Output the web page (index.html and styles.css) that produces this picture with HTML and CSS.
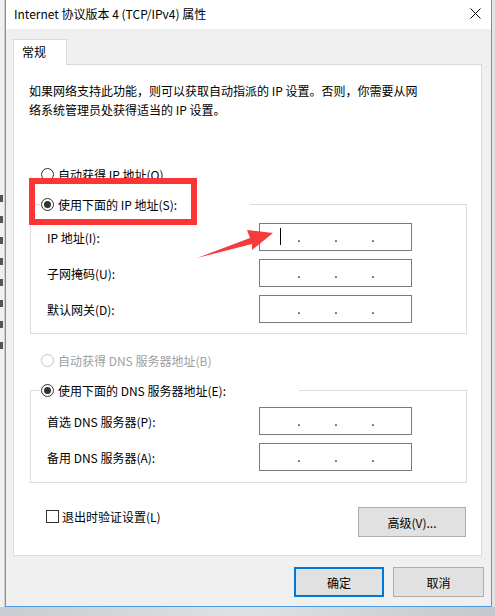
FILE: index.html
```html
<!DOCTYPE html>
<html lang="zh-CN">
<head>
    <meta charset="UTF-8">
    <meta name="viewport" content="width=device-width, initial-scale=1.0">
    <title>Internet 协议版本 4 (TCP/IPv4) 属性</title>
    <link rel="stylesheet" href="styles.css">
</head>
<body>
    <div class="desk">
        <div class="side side-left">
            <span class="mark"></span><span class="mark"></span><span class="mark"></span><span class="mark"></span>
            <span class="mark"></span><span class="mark"></span><span class="mark"></span><span class="mark"></span>
        </div>

        <div class="window">
            <div class="titlebar">
                <span class="title">Internet 协议版本 4 (TCP/IPv4) 属性</span>
                <svg class="close" width="11" height="11" viewBox="0 0 11 11">
                    <path d="M0.5 0.5 L10.5 10.5 M10.5 0.5 L0.5 10.5" stroke="#000" stroke-width="1" fill="none"/>
                </svg>
            </div>

            <div class="client">
                <div class="tabs">
                    <div class="tab">常规</div>
                </div>

                <div class="panel">
                    <p class="intro">如果网络支持此功能，则可以获取自动指派的 IP 设置。否则，你需要从网<br>络系统管理员处获得适当的 IP 设置。</p>

                    <div class="radio radio-top"><span class="dot"></span>自动获得 IP 地址(O)</div>

                    <div class="group group-ip">
                        <div class="group-head"><span class="dot checked"></span>使用下面的 IP 地址(S):</div>
                        <div class="rows">
                            <div class="row">
                                <span>IP 地址(I):</span>
                                <div class="ip"><span class="seg"><span class="caret"></span></span><span class="sep">.</span><span class="seg"></span><span class="sep">.</span><span class="seg"></span><span class="sep">.</span></div>
                            </div>
                            <div class="row">
                                <span>子网掩码(U):</span>
                                <div class="ip"><span class="seg"></span><span class="sep">.</span><span class="seg"></span><span class="sep">.</span><span class="seg"></span><span class="sep">.</span></div>
                            </div>
                            <div class="row">
                                <span>默认网关(D):</span>
                                <div class="ip"><span class="seg"></span><span class="sep">.</span><span class="seg"></span><span class="sep">.</span><span class="seg"></span><span class="sep">.</span></div>
                            </div>
                        </div>
                    </div>

                    <div class="radio radio-dns disabled"><span class="dot"></span>自动获得 DNS 服务器地址(B)</div>

                    <div class="group group-dns">
                        <div class="group-head"><span class="dot checked"></span>使用下面的 DNS 服务器地址(E):</div>
                        <div class="rows">
                            <div class="row">
                                <span>首选 DNS 服务器(P):</span>
                                <div class="ip"><span class="seg"></span><span class="sep">.</span><span class="seg"></span><span class="sep">.</span><span class="seg"></span><span class="sep">.</span></div>
                            </div>
                            <div class="row">
                                <span>备用 DNS 服务器(A):</span>
                                <div class="ip"><span class="seg"></span><span class="sep">.</span><span class="seg"></span><span class="sep">.</span><span class="seg"></span><span class="sep">.</span></div>
                            </div>
                        </div>
                    </div>

                    <div class="options">
                        <div class="check"><span class="box"></span>退出时验证设置(L)</div>
                        <button class="btn btn-adv">高级(V)...</button>
                    </div>

                    <!-- 标注 -->
                    <div class="callout"></div>
                    <svg class="arrow" width="90" height="40" viewBox="0 0 90 40">
                        <polygon points="7,33 60,13 57,5 83,8 62,25 62,19" fill="#f53b3b"/>
                    </svg>
                </div>

                <div class="actions">
                    <button class="btn btn-ok">确定</button>
                    <button class="btn btn-cancel">取消</button>
                </div>
            </div>
        </div>

        <div class="side side-right"></div>
    </div>
</body>
</html>
```

FILE: styles.css
```css
* {
    box-sizing: border-box;
}

body {
    margin: 0;
    background: linear-gradient(to right, #c9ccd0, #dfe1e3, #c4c7cb);
    font-family: "Noto Sans CJK SC", "Noto Sans", sans-serif;
    font-size: 12px;
    color: #000;
}

.desk {
    display: flex;
    height: 607px;
}

.side {
    background: #f0f0f0;
}

.side-left {
    width: 5px;
    display: flex;
    flex-direction: column;
    gap: 14px;
    padding-top: 195px;
    border-right: 1px solid #d0d0d0;
}

.mark {
    width: 3px;
    height: 7px;
    background: #555;
}

.side-right {
    width: 3px;
    background: #e4e4e4;
}

.window {
    width: 487px;
    height: 607px;
    border: 1px solid #4d9be6;
    border-top: none;
    background: #f0f0f0;
    display: flex;
    flex-direction: column;
}

.titlebar {
    height: 29px;
    background: #fff;
    display: flex;
    align-items: center;
    justify-content: space-between;
    padding: 0 10px 2px 8px;
}

.client {
    padding: 10px 9px 0 7px;
}

.tabs {
    display: flex;
}

.tab {
    width: 54px;
    height: 26px;
    border: 1px solid #d9d9d9;
    border-bottom: none;
    background: #fff;
    padding-left: 8px;
    line-height: 24px;
    margin-bottom: -1px;
    position: relative;
    z-index: 1;
}

.panel {
    position: relative;
    height: 492px;
    border: 1px solid #d9d9d9;
    background: #fff;
}

.intro {
    margin: 0;
    padding: 16px 0 0 15px;
    line-height: 19px;
}

.radio,
.group-head,
.check {
    display: flex;
    align-items: center;
    gap: 4px;
    height: 18px;
}

.radio-top {
    margin: 46px 0 0 27px;
}

.radio-dns {
    margin: 17px 0 0 27px;
}

.disabled {
    color: #a0a0a0;
}

.dot {
    width: 13px;
    height: 13px;
    border: 1px solid #333;
    border-radius: 50%;
    background: #fff;
    display: flex;
    align-items: center;
    justify-content: center;
}

.disabled .dot {
    border-color: #c4c4c4;
}

.dot.checked::after {
    content: "";
    width: 7px;
    height: 7px;
    border-radius: 50%;
    background: #333;
}

.group {
    margin: 21px 14px 0 16px;
    border: 1px solid #dcdcdc;
}

.group-head {
    margin: -10px 0 0 9px;
    padding-left: 1px;
    background: #fff;
}

.group-ip .group-head {
    width: 210px;
}

.group-dns .group-head {
    width: 259px;
}

.rows {
    display: flex;
    flex-direction: column;
    gap: 8px;
    padding: 10px 0 10px 16px;
}

.group-dns .rows {
    padding-top: 8px;
    padding-bottom: 11px;
}

.row {
    display: grid;
    grid-template-columns: 212px 153px;
    align-items: center;
}

.ip {
    height: 28px;
    border: 1px solid #7a7a7a;
    display: flex;
    align-items: center;
    padding-left: 4px;
}

.seg {
    width: 33px;
    height: 100%;
    display: flex;
    align-items: center;
}

.sep {
    width: 4px;
    text-align: center;
    line-height: 14px;
    color: #222;
}

.caret {
    width: 1px;
    height: 17px;
    margin: 0 0 2px 16px;
    background: #000;
}

.options {
    display: flex;
    justify-content: space-between;
    align-items: flex-start;
    margin: 24px 15px 0 32px;
}

.check {
    gap: 3px;
    margin-top: 1px;
    height: 16px;
}

.box {
    width: 13px;
    height: 13px;
    border: 1px solid #333;
    background: #fff;
}

.btn {
    width: 90px;
    height: 30px;
    padding: 0;
    background: #e1e1e1;
    border: 1px solid #adadad;
    font-family: inherit;
    font-size: 12px;
    color: #000;
}

.btn-adv {
    width: 108px;
}

.btn-ok {
    border: 2px solid #0078d7;
}

.btn-cancel {
    width: 91px;
}

.actions {
    display: flex;
    justify-content: flex-end;
    gap: 9px;
    margin: 11px -2px 0 0;
}

/* 红色标注 */
.callout {
    position: absolute;
    left: 15px;
    top: 113px;
    width: 168px;
    height: 47px;
    border: 6px solid #fb3434;
}

.arrow {
    position: absolute;
    left: 176px;
    top: 160px;
}
```
